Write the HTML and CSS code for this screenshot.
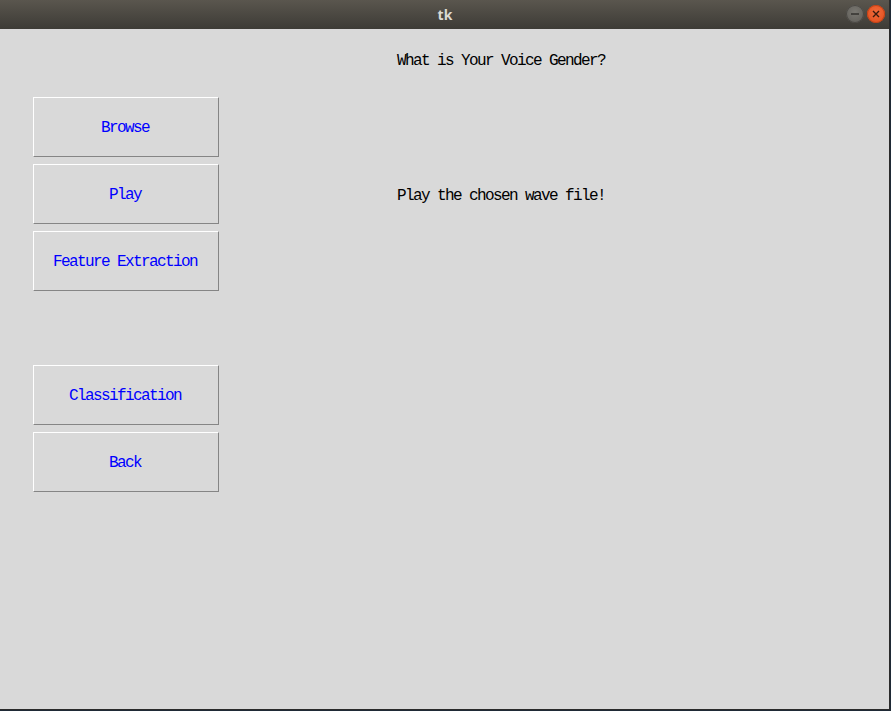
FILE: index.html
```html
<!DOCTYPE html>
<html>
<head>
<meta charset="utf-8">
<title>tk</title>
<link rel="stylesheet" href="styles.css">
</head>
<body>
<div class="window">
  <div class="titlebar">
    <span class="title">tk</span>
    <div class="controls">
      <span class="ctl minimize"><svg width="18" height="18" viewBox="0 0 18 18"><line x1="5" y1="9" x2="13" y2="9" stroke="#2e2d2a" stroke-width="1.4"/></svg></span>
      <span class="ctl close"><svg width="18" height="18" viewBox="0 0 18 18"><path d="M6 6 L12 12 M12 6 L6 12" stroke="#3a1a0e" stroke-width="1.4"/></svg></span>
    </div>
  </div>
  <div class="content">
    <div class="heading">What is Your Voice Gender?</div>
    <button class="btn r2">Browse</button>
    <button class="btn r3">Play</button>
    <div class="message r3">Play the chosen wave file!</div>
    <button class="btn r4">Feature Extraction</button>
    <button class="btn r6">Classification</button>
    <button class="btn r7">Back</button>
  </div>
</div>
</body>
</html>
```

FILE: styles.css
```css
html, body {
  margin: 0;
  padding: 0;
}
body {
  width: 891px;
  height: 711px;
  background: #1f2a36;
  overflow: hidden;
}
.window {
  width: 889px;
  height: 709px;
  border-right: 1px solid #2b2b2b;
  border-bottom: 1px solid #2b2b2b;
  background: #d9d9d9;
  display: flex;
  flex-direction: column;
}
.titlebar {
  height: 29px;
  flex: none;
  background: linear-gradient(#5a564e, #3d3b36);
  display: flex;
  align-items: center;
  justify-content: center;
  position: relative;
}
.title {
  font-family: "Noto Sans", "DejaVu Sans", sans-serif;
  font-weight: bold;
  font-size: 14px;
  color: #dcd9d2;
  margin-left: 1px;
}
.controls {
  position: absolute;
  right: 4px;
  top: 5px;
  display: flex;
  gap: 3px;
}
.ctl {
  width: 18px;
  height: 18px;
  border-radius: 50%;
  display: flex;
}
.minimize {
  background: radial-gradient(circle at 50% 40%, #7a7872, #5c5a55);
  box-shadow: inset 0 0 0 1px #4a4844;
}
.close {
  background: radial-gradient(circle at 50% 40%, #f26a3a, #df4b1a);
  box-shadow: inset 0 0 0 1px #c24015;
}
.content {
  flex: 1;
  display: grid;
  grid-template-columns: 186px auto;
  grid-template-rows: 61px repeat(6, 60px);
  row-gap: 7px;
  column-gap: 178px;
  padding-left: 33px;
  font-family: "Liberation Mono", "DejaVu Sans Mono", monospace;
  font-size: 16px;
  letter-spacing: -1.6px;
}
.heading {
  grid-column: 2;
  grid-row: 1;
  padding-top: 24px;
  line-height: 16px;
  color: #000;
}
.message {
  grid-column: 2;
  align-self: center;
  padding-top: 3px;
  line-height: 16px;
  color: #000;
}
.btn {
  grid-column: 1;
  margin: 0;
  padding: 2px 0 0 0;
  background: #d9d9d9;
  border: 1px solid;
  border-color: #ffffff #858585 #858585 #ffffff;
  color: #0000ff;
  font-family: inherit;
  font-size: inherit;
  letter-spacing: inherit;
  text-align: center;
  text-indent: -2px;
}
.r2 { grid-row: 2; }
.r3 { grid-row: 3; }
.r4 { grid-row: 4; }
.r6 { grid-row: 6; }
.r7 { grid-row: 7; }
```
